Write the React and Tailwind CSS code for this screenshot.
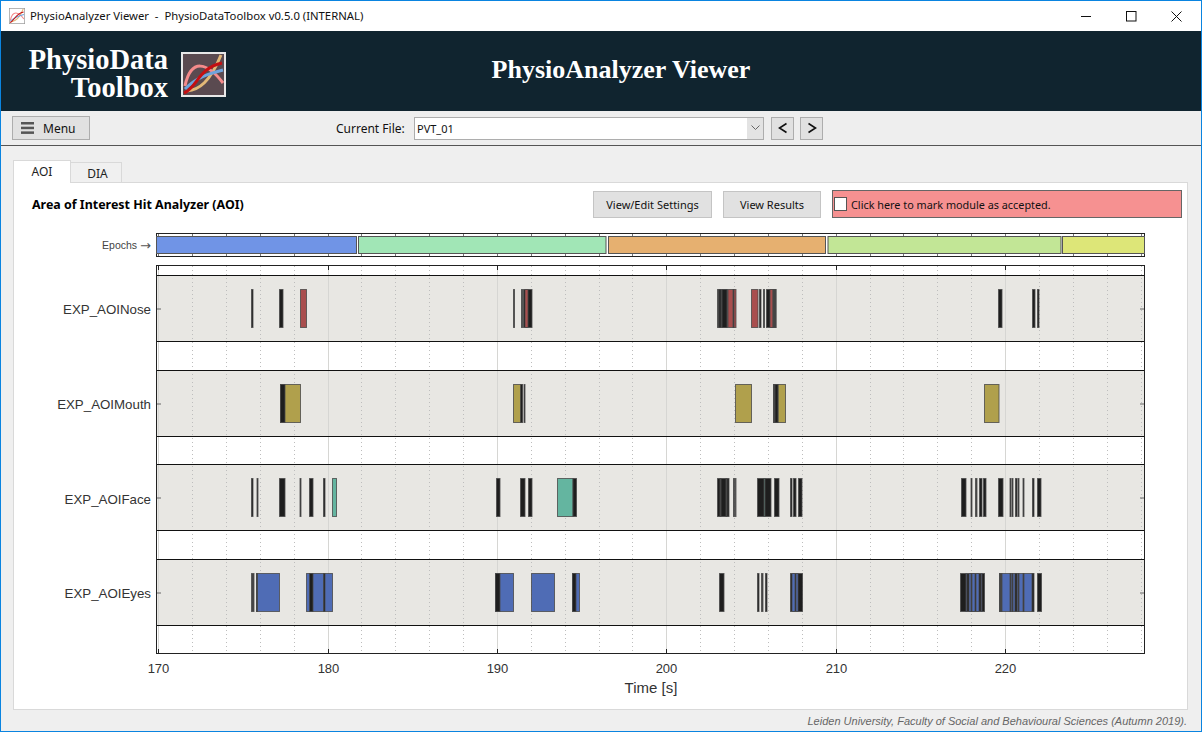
const ui = "font-['Noto_Sans',sans-serif]";

const DARK = "#1e1e1e";
const GREY = "#444444";
const RED = "#a94e4e";
const GOLD = "#b0a04c";
const TEAL = "#64b5a0";
const BLUE = "#4f6cb5";

// [x0, x1, colour] in screen px, one list per AOI row
const rows = [
  {
    name: "EXP_AOINose",
    top: 289.5,
    bars: [
      [251.5, 253, DARK], [279.5, 283, DARK], [300.5, 306.5, RED],
      [513.5, 514.5, DARK], [521.5, 522.5, DARK], [523.5, 532, DARK], [525, 528, RED],
      [717.5, 727.5, GREY], [719, 721, DARK], [722, 727, DARK], [728, 736, RED], [733, 734, DARK],
      [751.5, 758, RED], [759.5, 761, DARK], [763.5, 764.5, DARK], [766.5, 776, DARK], [770, 773, RED], [773, 776, GREY],
      [998.5, 1002, DARK], [1032.5, 1035, DARK], [1037.5, 1039, DARK],
    ],
  },
  {
    name: "EXP_AOIMouth",
    top: 384.5,
    bars: [
      [280.5, 300.5, GOLD], [280.5, 285, DARK],
      [513.5, 522, GOLD], [520.5, 522.5, DARK], [524, 525, DARK],
      [735.5, 751.5, GOLD],
      [773.5, 785.5, GOLD], [773.5, 778, GREY], [775, 778, DARK],
      [984.5, 999, GOLD],
    ],
  },
  {
    name: "EXP_AOIFace",
    top: 478.5,
    bars: [
      [251.5, 253, DARK], [257, 258, DARK], [279.5, 285, DARK], [300, 301, DARK], [309.5, 313, DARK], [323.5, 325, DARK], [332.5, 336.5, TEAL],
      [496.5, 500, DARK], [520.5, 525, DARK], [528.5, 532, DARK], [557.5, 573, TEAL], [573, 576.5, DARK],
      [717.5, 729, DARK], [720, 721, GREY], [726, 727, GREY], [733.5, 734.5, DARK], [735.5, 736, DARK], [757.5, 771, DARK], [764, 765, TEAL], [774.5, 779, DARK],
      [790.5, 792, DARK], [793.5, 796, DARK], [798.5, 802, DARK],
      [961.5, 966, DARK], [971, 972, DARK], [975.5, 977, GREY], [979.5, 982, DARK], [983.5, 986, DARK], [998.5, 1003, DARK],
      [1010, 1011, DARK], [1012, 1013, DARK], [1015.5, 1017, DARK], [1018, 1019, DARK], [1023, 1024, DARK], [1032.5, 1034, DARK], [1037.5, 1041, DARK],
    ],
  },
  {
    name: "EXP_AOIEyes",
    top: 573.5,
    bars: [
      [251.5, 254, GREY], [256.5, 279.5, BLUE], [256.5, 257.5, DARK],
      [306.5, 332.5, BLUE], [309.5, 313, DARK], [323.5, 325, DARK],
      [495.5, 513.5, BLUE], [495.5, 500, DARK],
      [531.5, 554.5, BLUE],
      [572.5, 579.5, BLUE], [572.5, 576, DARK],
      [719.5, 724, DARK], [757.5, 759, DARK], [761.5, 763, GREY], [765.5, 767, DARK],
      [790.5, 802.5, DARK], [792, 795, BLUE], [796, 798, BLUE],
      [960.5, 984.5, DARK], [966, 967, BLUE], [969, 975, BLUE], [971, 972, DARK], [976, 979, BLUE], [981, 982, BLUE],
      [999.5, 1033.5, BLUE], [999.5, 1002, GREY], [1010, 1011, DARK], [1012, 1013, DARK], [1015, 1017, DARK], [1018, 1019, DARK], [1023, 1024, DARK], [1032, 1034, DARK],
      [1037.5, 1041.5, DARK],
    ],
  },
];

const epochs = [
  [156.5, 356.5, "#7094e6"],
  [358.5, 606, "#a1e6b6"],
  [608.5, 825.5, "#e6b070"],
  [828, 1061, "#c2e696"],
  [1062.5, 1144.5, "#dde678"],
];

const timeX = (t) => Math.floor(158.6 + 16.94 * (t - 170)) + 0.5;
const majors = [170, 180, 190, 200, 210, 220];
const minors = [];
for (let t = 172; t <= 228; t += 2) if (t % 10 !== 0) minors.push(t);
const bands = [275.5, 370.5, 464.5, 559.5];

function LogoMark({ className, fill = "#5a4a50", frame = "#e8e8e8" }) {
  return (
    <svg viewBox="0 0 45 45" className={className}>
      <rect x="1" y="1" width="43" height="43" fill={fill} stroke={frame} strokeWidth="2" />
      <path d="M6 39C18 38 29 30 40 3" fill="none" stroke="#e3b877" strokeWidth="3" />
      <path d="M4 34C10 6 26 10 42 31" fill="none" stroke="#f58b8b" strokeWidth="3" />
      <path d="M4 37C15 26 26 22 42 18" fill="none" stroke="#6fa3dc" strokeWidth="3" />
      <path d="M3 41C16 36 17 16 41 11" fill="none" stroke="#c40f12" strokeWidth="3" />
    </svg>
  );
}

function EpochStrip() {
  return (
    <svg viewBox="156 233 990 25" className="w-[990px] h-[25px] block">
      <rect x="156.5" y="233.5" width="988" height="23" fill="#fff" stroke="#222" />
      {[...majors, ...minors].map((t) => (
        <g key={t} stroke="#777">
          <line x1={timeX(t)} x2={timeX(t)} y1="234" y2="236" />
          <line x1={timeX(t)} x2={timeX(t)} y1="254" y2="256" />
        </g>
      ))}
      {epochs.map(([a, b, c]) => (
        <rect key={a} x={a} y="236.5" width={b - a} height="17" fill={c} stroke="#555" />
      ))}
    </svg>
  );
}

function HitPlot() {
  return (
    <svg viewBox="156 265 990 436" className="w-[990px] h-[436px] block overflow-visible">
      <rect x="156.5" y="265.5" width="988" height="388" fill="#fff" />
      {bands.map((y) => (
        <rect key={y} x="157" y={y} width="987" height="66" fill="#e8e7e3" />
      ))}
      {minors.map((t) => (
        <line key={t} x1={timeX(t)} x2={timeX(t)} y1="266" y2="653" stroke="#bdbdbd" strokeDasharray="1 3" />
      ))}
      {majors.map((t) => (
        <g key={t}>
          <line x1={timeX(t)} x2={timeX(t)} y1="266" y2="653" stroke="#d6d6d3" />
          <line x1={timeX(t)} x2={timeX(t)} y1="266" y2="270" stroke="#222" />
          <line x1={timeX(t)} x2={timeX(t)} y1="649" y2="653" stroke="#222" />
          <text x={timeX(t)} y="673" textAnchor="middle" fontSize="13" fill="#333" fontFamily="'Liberation Sans',sans-serif">
            {t}
          </text>
        </g>
      ))}
      {bands.map((y) => (
        <g key={y} stroke="#111">
          <line x1="156" x2="1145" y1={y} y2={y} />
          <line x1="156" x2="1145" y1={y + 66} y2={y + 66} />
          <line x1="157" x2="161" y1={y + 33.5} y2={y + 33.5} stroke="#666" />
          <line x1="1140" x2="1144" y1={y + 33.5} y2={y + 33.5} stroke="#666" />
        </g>
      ))}
      {rows.map((r) =>
        r.bars.map(([a, b, c], i) => (
          <rect key={r.name + i} x={a} y={r.top} width={b - a} height="38" fill={c} stroke="#484848" strokeOpacity="0.8" />
        ))
      )}
      <rect x="156.5" y="265.5" width="988" height="388" fill="none" stroke="#222" />
      <text x="651" y="693" textAnchor="middle" fontSize="15" fill="#333" fontFamily="'Liberation Sans',sans-serif">
        Time [s]
      </text>
    </svg>
  );
}

export default function App() {
  return (
    <div className={`w-[1202px] h-[732px] flex flex-col overflow-hidden bg-[#efefef] border border-[#0a84e0] ${ui}`}>
      {/* title bar */}
      <div className="h-[30px] shrink-0 bg-white flex items-center pl-2 text-[11.3px] text-[#111]">
        <LogoMark className="w-4 h-4 mr-[5px]" fill="#fff" frame="#999" />
        <span className="whitespace-pre">PhysioAnalyzer Viewer  -  PhysioDataToolbox v0.5.0 (INTERNAL)</span>
        <div className="ml-auto pr-[2px] flex items-center">
          <div className="w-[45px] h-[30px] flex items-center justify-center">
            <svg width="11" height="11" viewBox="0 0 11 11"><path d="M0 5.5H10" stroke="#111" /></svg>
          </div>
          <div className="w-[45px] h-[30px] flex items-center justify-center">
            <svg width="11" height="11" viewBox="0 0 11 11"><rect x="0.5" y="0.5" width="9.5" height="9.5" fill="none" stroke="#111" /></svg>
          </div>
          <div className="w-[45px] h-[30px] flex items-center justify-center">
            <svg width="11" height="11" viewBox="0 0 11 11"><path d="M0.5 0.5L10.5 10.5M10.5 0.5L0.5 10.5" stroke="#111" /></svg>
          </div>
        </div>
      </div>

      {/* banner */}
      <div className="h-[80px] shrink-0 bg-[#10242f] flex items-center relative">
        <div className="ml-[26px] flex items-center font-['Liberation_Serif',serif] font-bold text-white">
          <div className="text-[28.5px] leading-[33px] h-[61px] text-right w-[141px] mt-[4px]">
            <div className="h-[28px]">PhysioData</div>
            <div className="h-[33px]">Toolbox</div>
          </div>
          <LogoMark className="w-[45px] h-[45px] ml-[13px] mt-[7px]" />
        </div>
        <div className="absolute left-0 right-0 text-center pl-[40px] pb-[4px] font-['Liberation_Serif',serif] font-bold text-white text-[26px]">
          PhysioAnalyzer Viewer
        </div>
      </div>

      {/* toolbar */}
      <div className="h-[35px] shrink-0 bg-[#eeeeee] border-b border-[#555] flex items-center pl-[11px] text-[12px] text-[#111]">
        <button className="w-[78px] h-[24px] bg-[#e1e1e1] border border-[#adadad] flex items-center pl-2 text-[12px]">
          <svg width="13" height="12" viewBox="0 0 13 12" className="mr-[9px]">
            <rect y="0" width="13" height="2.5" fill="#555" />
            <rect y="4.7" width="13" height="2.5" fill="#555" />
            <rect y="9.4" width="13" height="2.5" fill="#555" />
          </svg>
          <span className="pt-[2px]">Menu</span>
        </button>
        <span className="ml-[246px] w-[78px] pt-[2px]">Current File:</span>
        <div className="w-[350px] h-[23px] bg-white border border-[#adadad] flex items-center pl-[2px] text-[11px]">
          <span className="flex-1 pt-[2px]">PVT_01</span>
          <div className="w-[16px] h-full bg-[#e3e3e3] flex items-center justify-center">
            <svg width="9" height="6" viewBox="0 0 9 6"><path d="M0.5 0.5L4.5 4.5L8.5 0.5" fill="none" stroke="#666" /></svg>
          </div>
        </div>
        <button className="ml-[7px] w-[23px] h-[23px] bg-[#e1e1e1] border border-[#adadad] flex items-center justify-center">
          <svg width="10" height="12" viewBox="0 0 10 12"><path d="M8.5 1.5L1.5 6L8.5 10.5" fill="none" stroke="#111" strokeWidth="1.6" /></svg>
        </button>
        <button className="ml-[6px] w-[23px] h-[23px] bg-[#e1e1e1] border border-[#adadad] flex items-center justify-center">
          <svg width="10" height="12" viewBox="0 0 10 12"><path d="M1.5 1.5L8.5 6L1.5 10.5" fill="none" stroke="#111" strokeWidth="1.6" /></svg>
        </button>
      </div>

      {/* tabs + panel */}
      <div className="flex-1 min-h-0 pt-[14px] pl-[12px] pr-[14px] flex flex-col">
        <div className="flex items-end h-[23px] text-[12px] text-[#222] relative z-10">
          <div className="w-[58px] h-[23px] bg-white border border-[#d9d9d9] border-b-0 flex items-center justify-center">AOI</div>
          <div className="w-[51px] h-[21px] bg-[#f0f0f0] border border-l-0 border-[#d9d9d9] flex items-center justify-center pt-[3px] pl-[3px]">DIA</div>
        </div>
        <div className="w-[1175px] h-[528px] -mt-px bg-white border border-[#d9d9d9] flex flex-col">
          <div className="h-[34px] mt-[4px] flex items-center pl-[18px]">
            <span className="font-bold text-[12.45px] text-black w-[561px] pt-[2px]">Area of Interest Hit Analyzer (AOI)</span>
            <button className="w-[119px] h-[27px] bg-[#e1e1e1] border border-[#c4c4c4] text-[11px] text-[#111] pt-[2px]">View/Edit Settings</button>
            <button className="ml-[11px] w-[98px] h-[27px] bg-[#e1e1e1] border border-[#c4c4c4] text-[11px] text-[#111] pt-[2px]">View Results</button>
            <div className="ml-[11px] w-[350px] h-[28px] bg-[#f69191] border border-[#666] flex items-center pl-[1px] text-[10.85px] text-[#111]">
              <span className="w-[13px] h-[14px] bg-white border border-[#555] mr-[4px]" />
              <span className="pt-[2px]">Click here to mark module as accepted.</span>
            </div>
          </div>
          <div className="flex mt-[12px] h-[25px]">
            <div className="w-[142px] shrink-0 flex items-center justify-end pr-[5px] font-['Liberation_Sans',sans-serif] text-[10.5px] text-[#444]">
              Epochs
              <span className="ml-[3px] font-['DejaVu_Sans',sans-serif] text-[13px] leading-none text-[#555]">→</span>
            </div>
            <EpochStrip />
          </div>
          <div className="flex mt-[7px]">
            <div className="w-[142px] shrink-0 pt-[11px] font-['Liberation_Sans',sans-serif] text-[13.3px] text-[#333]">
              {rows.map((r) => (
                <div key={r.name} className="h-[94.67px] pb-[26px] pr-[5px] flex items-center justify-end">
                  {r.name}
                </div>
              ))}
            </div>
            <HitPlot />
          </div>
        </div>
        <div className="text-right pr-0 mt-[3px] font-['Liberation_Sans',sans-serif] italic text-[11px] text-[#666]">
          Leiden University, Faculty of Social and Behavioural Sciences (Autumn 2019).
        </div>
      </div>
    </div>
  );
}
